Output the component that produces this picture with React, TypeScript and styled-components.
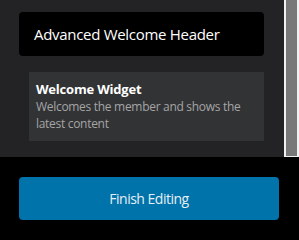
import styled, { createGlobalStyle } from "styled-components";

const GlobalStyle = createGlobalStyle`
  body {
    margin: 0;
    background: #000;
    font-family: "Open Sans", "Noto Sans", Arial, sans-serif;
  }
`;

const Panel = styled.div`
  height: 157px;
  background: #232325;
  display: flex;
  overflow: hidden;
`;

const PanelInner = styled.div`
  flex: 1;
  padding: 12px 20px 17px 19px;
`;

// drawn scrollbar, the headless browser hides native ones
const ScrollTrack = styled.div`
  width: 11px;
  padding: 0 2px 1px;
  background: #f1f1f1;
  display: flex;
`;

const ScrollThumb = styled.div`
  flex: 1;
  background: #787878;
`;

const TitleBox = styled.div`
  background: #000;
  border-radius: 4px;
  height: 44px;
  display: flex;
  align-items: center;
  padding: 0 15px;
  color: #fff;
  font-size: 15px;
  letter-spacing: -0.3px;
`;

const WidgetCard = styled.div`
  margin: 16px 0 0 10px;
  background: #323335;
  padding: 9px 7px 9px;
`;

const WidgetName = styled.div`
  color: #fff;
  font-size: 13px;
  font-weight: 700;
  letter-spacing: -0.2px;
  line-height: 17px;
`;

const WidgetText = styled.div`
  color: #a5a5a5;
  font-size: 12px;
  letter-spacing: -0.3px;
  line-height: 17px;
`;

const Footer = styled.div`
  padding: 20px 20px 20px 19px;
`;

const FinishButton = styled.button`
  width: 100%;
  height: 43px;
  border: none;
  border-radius: 4px;
  background: #0073aa;
  color: #e8eff4;
  font-family: inherit;
  font-size: 14px;
  letter-spacing: -0.5px;
  cursor: pointer;
`;

export default function App() {
  return (
    <>
      <GlobalStyle />
      <Panel>
        <PanelInner>
          <TitleBox>Advanced Welcome Header</TitleBox>
          <WidgetCard>
            <WidgetName>Welcome Widget</WidgetName>
            <WidgetText>Welcomes the member and shows the latest content</WidgetText>
          </WidgetCard>
        </PanelInner>
        <ScrollTrack>
          <ScrollThumb />
        </ScrollTrack>
      </Panel>
      <Footer>
        <FinishButton>Finish Editing</FinishButton>
      </Footer>
    </>
  );
}
